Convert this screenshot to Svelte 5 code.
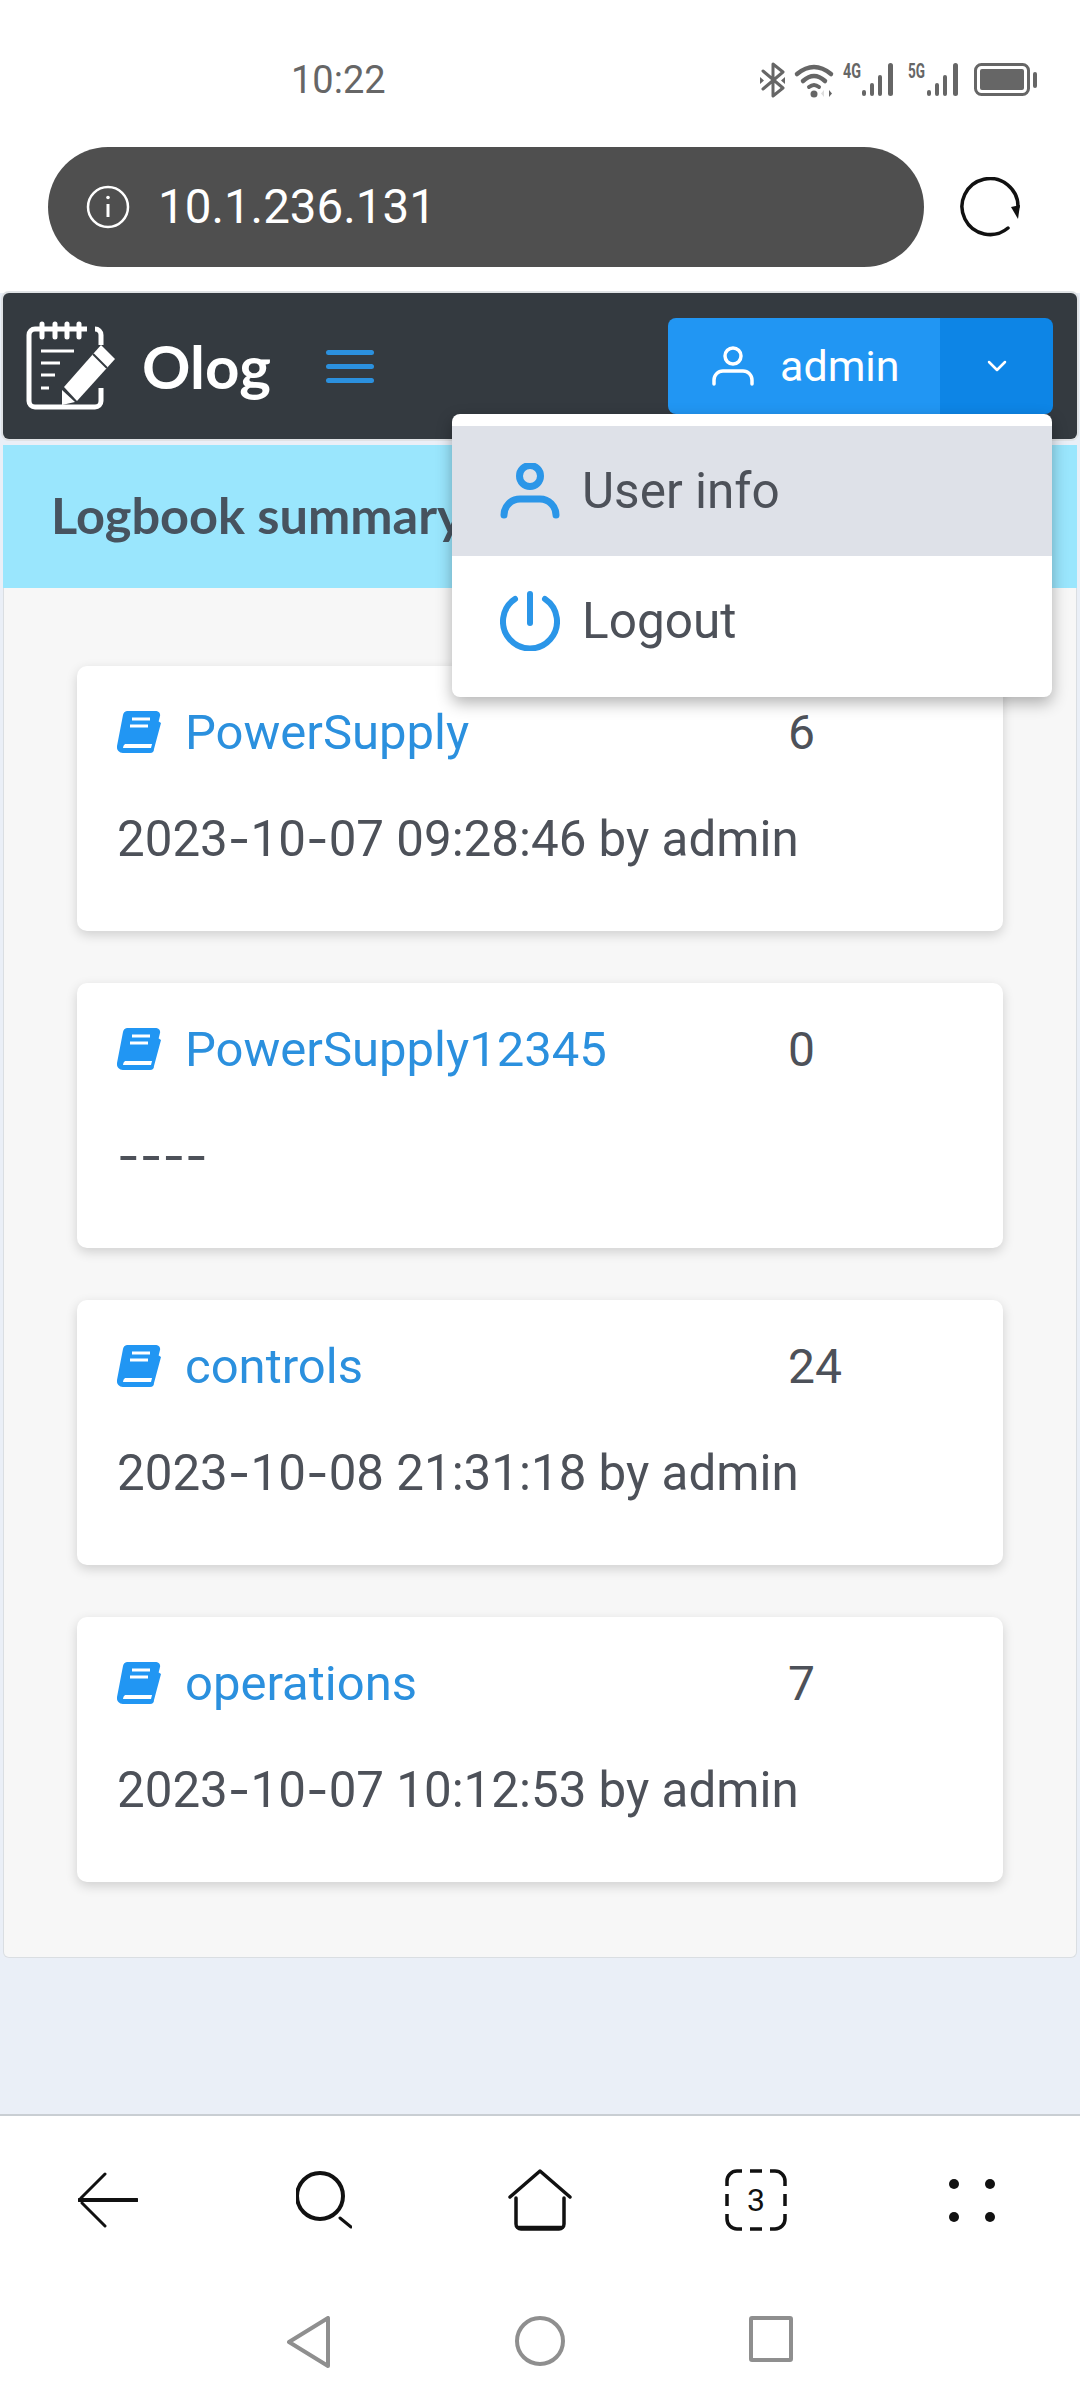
<script>
  const logbooks = [
    { name: "PowerSupply", count: 6, last: "2023-10-07 09:28:46 by admin" },
    { name: "PowerSupply12345", count: 0, last: "----" },
    { name: "controls", count: 24, last: "2023-10-08 21:31:18 by admin" },
    { name: "operations", count: 7, last: "2023-10-07 10:12:53 by admin" }
  ];
</script>

<div class="phone">
  <div class="status">
    <span class="time">10:22</span>
    <svg class="status-icons" width="277" height="42" viewBox="0 -6 277 42" fill="#666">
      <path d="M3 9 L23 26 L13 34 V2 L23 10 L3 27" fill="none" stroke="#666" stroke-width="3" stroke-linejoin="round" stroke-linecap="round"/>
      <path d="M0 15 l4 3.5 l-4 3.5z M25 15 l-4 3.5 l4 3.5z"/>
      <path d="M37 12 Q54 -2 71 12" fill="none" stroke="#666" stroke-width="4.5" stroke-linecap="round"/>
      <path d="M43 19 Q54 9 65 19" fill="none" stroke="#666" stroke-width="4.5" stroke-linecap="round"/>
      <path d="M49 25 Q54 21 59 25" fill="none" stroke="#666" stroke-width="4" stroke-linecap="round"/>
      <circle cx="54" cy="32" r="3.5"/>
      <path d="M64 28 v7 l-3 -3.5z" fill="#ddd"/><path d="M69 28 v7 l3 -3.5z"/>
      <text x="83" y="16" class="net" textLength="18" lengthAdjust="spacingAndGlyphs">4G</text>
      <rect x="102" y="28" width="4" height="6" rx="2"/><rect x="110" y="21" width="4" height="13" rx="2"/><rect x="118" y="13" width="4" height="21" rx="2"/><rect x="128" y="1" width="5" height="33" rx="2.5"/>
      <text x="148" y="16" class="net" textLength="17" lengthAdjust="spacingAndGlyphs">5G</text>
      <rect x="167" y="28" width="4" height="6" rx="2"/><rect x="175" y="21" width="4" height="13" rx="2"/><rect x="183" y="13" width="4" height="21" rx="2"/><rect x="193" y="1" width="5" height="33" rx="2.5"/>
      <rect x="215.5" y="2.5" width="53" height="30" rx="6" fill="none" stroke="#666" stroke-width="3"/>
      <rect x="220" y="7" width="44" height="21" rx="2"/>
      <rect x="273" y="10" width="4" height="16" rx="2"/>
    </svg>
  </div>

  <div class="address">
    <div class="url">
      <svg width="44" height="44" viewBox="0 0 44 44" fill="none" stroke="#fff" stroke-width="2.5">
        <circle cx="22" cy="22" r="20"/>
        <path d="M22 19 V32" stroke-width="3"/>
        <circle cx="22" cy="12.5" r="1.8" fill="#fff" stroke="none"/>
      </svg>
      <span>10.1.236.131</span>
    </div>
    <svg class="reload" width="62" height="60" viewBox="0 0 62 60" fill="none">
      <path d="M49 51 A28 28 0 1 1 59 30" stroke="#111" stroke-width="3.5" stroke-linecap="round"/>
      <path d="M52 30 L61 28 L59 42z" fill="#111"/>
    </svg>
  </div>

  <div class="page">
    <nav class="navbar">
      <svg class="logo" width="90" height="90" viewBox="0 0 90 90" fill="none">
        <path d="M62 8 H10 a6 6 0 0 0 -6 6 V80 a6 6 0 0 0 6 6 H70 a6 6 0 0 0 6 -6 V67 M76 24 V14 a6 6 0 0 0 -6 -6" stroke="#fff" stroke-width="5"/>
        <g stroke="#fff" stroke-width="5" stroke-linecap="round">
          <path d="M17 3 V16 M30 3 V16 M42 3 V16 M54 3 V16"/>
        </g>
        <g stroke="#fff" stroke-width="3">
          <path d="M16 30 H49 M16 42 H35 M16 54 H30 M16 67 H24"/>
        </g>
        <path d="M39 66 L76 24 L90 38 L52 80z" fill="#fff"/>
        <path d="M68 33 L82 47" stroke="#343a40" stroke-width="2"/>
        <path d="M37 69 L50 81 L37 84z" fill="#fff"/>
      </svg>
      <span class="brand">Olog</span>
      <span class="burger"><i></i><i></i><i></i></span>
      <div class="user-group">
        <div class="user-btn">
          <svg width="42" height="40" viewBox="0 0 42 40" fill="none" stroke="#fff" stroke-width="3.5" stroke-linecap="round">
            <circle cx="21" cy="10" r="8"/>
            <path d="M2 38 V34 a9 9 0 0 1 9 -9 H31 a9 9 0 0 1 9 9 V38"/>
          </svg>
          <span>admin</span>
        </div>
        <div class="caret">
          <svg width="20" height="12" viewBox="0 0 20 12" fill="none" stroke="#fff" stroke-width="2.5" stroke-linecap="round" stroke-linejoin="round">
            <path d="M2 2 L10 10 L18 2"/>
          </svg>
        </div>
      </div>
      <div class="menu">
        <div class="menu-item active">
          <svg width="60" height="56" viewBox="0 0 60 56" fill="none" stroke="#2b96e8" stroke-width="7" stroke-linecap="round">
            <circle cx="30" cy="13" r="10.5"/>
            <path d="M4 52 a16 16 0 0 1 16 -16 H40 a16 16 0 0 1 16 16"/>
          </svg>
          <span>User info</span>
        </div>
        <div class="menu-item">
          <svg width="60" height="60" viewBox="0 0 60 60" fill="none" stroke="#2b96e8" stroke-width="6" stroke-linecap="round">
            <path d="M15 8 A27 27 0 1 0 45 8"/>
            <path d="M30 3 V32"/>
          </svg>
          <span>Logout</span>
        </div>
      </div>
    </nav>

    <div class="alert">Logbook summary</div>

    <section class="panel">
      {#each logbooks as book}
        <article class="card">
          <div class="row">
            <svg class="book" width="44" height="42" viewBox="0 0 44 42">
              <path d="M10 0 H39 a4 4 0 0 1 4 5 L36 33 H8 a5 5 0 0 0 -2 4 H34 L41 10 l3 2 L37 38 a4 4 0 0 1 -4 4 H6 a6 6 0 0 1 -6 -7 L6 4 a5 5 0 0 1 4 -4z" fill="#2196f3"/>
              <path d="M15 8 H33 M13 15 H31" stroke="#fff" stroke-width="3"/>
            </svg>
            <span class="name">{book.name}</span>
            <span class="count">{book.count}</span>
          </div>
          <div class="last">{#each book.last.split("-") as part, i}{#if i}<span class="dash">-</span>{/if}{part}{/each}</div>
        </article>
      {/each}
    </section>
  </div>

  <div class="toolbar">
    <svg width="60" height="56" viewBox="0 0 60 56" fill="none" stroke="#111" stroke-linecap="round">
      <path d="M1 28 H59" stroke-width="4"/>
      <path d="M27 2 L3 26 M4 31 L27 54" stroke-width="3"/>
    </svg>
    <svg width="56" height="58" viewBox="0 0 56 58" fill="none" stroke="#111" stroke-linecap="round">
      <circle cx="24" cy="25" r="23" stroke-width="4"/>
      <path d="M44 47 L55 56" stroke-width="3"/>
    </svg>
    <svg width="64" height="62" viewBox="0 0 64 62" fill="none" stroke="#111" stroke-linecap="round" stroke-linejoin="round">
      <path d="M2 28 L32 2 L62 28" stroke-width="3.5"/>
      <path d="M8 29 V55 a5 5 0 0 0 5 5 H51 a5 5 0 0 0 5 -5 V29" stroke-width="3.5"/>
      <path d="M10 58.5 H54" stroke-width="3.5"/>
    </svg>
    <div class="tabs">
      <svg width="62" height="62" viewBox="0 0 62 62" fill="none" stroke="#111" stroke-width="3.5">
        <path d="M2 17 V12 a10 10 0 0 1 10 -10 H17 M45 2 H50 a10 10 0 0 1 10 10 V17 M60 45 V50 a10 10 0 0 1 -10 10 H45 M17 60 H12 a10 10 0 0 1 -10 -10 V45"/>
        <path d="M25 2 H37 M25 60 H37 M2 25 V37 M60 25 V37"/>
      </svg>
      <span>3</span>
    </div>
    <svg width="46" height="43" viewBox="0 0 46 43" fill="#111">
      <circle cx="5" cy="5" r="5"/><circle cx="41" cy="5" r="5"/><circle cx="5" cy="38" r="5"/><circle cx="41" cy="38" r="5"/>
    </svg>
  </div>

  <div class="sysnav">
    <svg width="44" height="52" viewBox="0 0 44 52" fill="none" stroke="#8f8f8f" stroke-width="4" stroke-linejoin="round">
      <path d="M41 2 V50 L2 26z"/>
    </svg>
    <svg width="50" height="50" viewBox="0 0 50 50" fill="none" stroke="#8f8f8f" stroke-width="4">
      <circle cx="25" cy="25" r="23"/>
    </svg>
    <svg width="44" height="46" viewBox="0 0 44 46" fill="none" stroke="#8f8f8f" stroke-width="4">
      <rect x="2" y="2" width="40" height="42" rx="1"/>
    </svg>
  </div>
</div>

<style>
  :global(body) {
    background: #fff;
    font-family: Roboto, "Liberation Sans", sans-serif;
  }
  .phone {
    width: 1080px;
    height: 2400px;
    display: flex;
    flex-direction: column;
    overflow: hidden;
    background: #fff;
  }
  .status {
    height: 147px;
    box-sizing: border-box;
    padding: 56px 43px 0 291px;
    display: flex;
    justify-content: space-between;
    align-items: flex-start;
  }
  .time {
    margin-top: 6px;
    font-size: 38px;
    line-height: 36px;
    color: #666;
  }
  .net {
    font-size: 20px;
    font-weight: 700;
    fill: #666;
  }
  .address {
    height: 146px;
    display: flex;
    align-items: flex-start;
    padding-left: 48px;
  }
  .url {
    width: 876px;
    height: 120px;
    border-radius: 60px;
    background: #4f4f4f;
    color: #fff;
    display: flex;
    align-items: center;
    gap: 28px;
    padding-left: 38px;
    box-sizing: border-box;
    font-size: 47.5px;
  }
  .reload {
    margin: 30px 0 0 35px;
  }
  .page {
    flex: 1;
    background: #eaeff7;
    min-height: 0;
  }
  .navbar {
    position: relative;
    margin: 0 3px;
    height: 146px;
    box-sizing: border-box;
    background: #343a40;
    border-radius: 6px;
    box-shadow: 0 0 0 2px #dfe2e5;
    display: flex;
    align-items: center;
    padding-left: 22px;
  }
  .logo {
    flex: none;
  }
  .brand {
    font-family: Lato, sans-serif;
    font-weight: 700;
    font-size: 60px;
    color: #fff;
    margin-left: 27px;
  }
  .burger {
    display: flex;
    flex-direction: column;
    gap: 9px;
    margin-left: 55px;
    width: 48px;
  }
  .burger i {
    display: block;
    height: 5px;
    border-radius: 3px;
    background: #2b90de;
  }
  .user-group {
    margin-left: auto;
    margin-right: 24px;
    align-self: flex-start;
    margin-top: 25px;
    display: flex;
    height: 96px;
    width: 385px;
    border-radius: 8px;
    overflow: hidden;
    color: #fff;
  }
  .user-btn {
    flex: 1;
    background: #2196f3;
    display: flex;
    align-items: center;
    gap: 26px;
    padding-left: 44px;
    font-size: 43px;
  }
  .caret {
    width: 113px;
    background: #0d85e6;
    display: flex;
    align-items: center;
    justify-content: center;
  }
  .menu {
    position: absolute;
    left: 449px;
    top: 121px;
    width: 600px;
    height: 283px;
    box-sizing: border-box;
    padding-top: 12px;
    background: #fff;
    border-radius: 8px;
    box-shadow: 0 6px 16px rgba(0, 0, 0, 0.3);
    z-index: 2;
  }
  .menu-item {
    height: 130px;
    display: flex;
    align-items: center;
    gap: 22px;
    padding-left: 48px;
    font-size: 49.5px;
    color: #4d5159;
  }
  .menu-item.active {
    background: #dee1e8;
  }
  .alert {
    margin: 6px 3px 0;
    height: 143px;
    box-sizing: border-box;
    padding: 0 0 5px 48px;
    display: flex;
    align-items: center;
    background: #9ae6fd;
    font-family: Lato, sans-serif;
    font-weight: 700;
    font-size: 50.5px;
    color: #47535f;
  }
  .panel {
    margin: 0 3px;
    padding: 78px 73px 74px;
    height: 1370px;
    box-sizing: border-box;
    background: #f7f7f7;
    border: 1px solid #dadee2;
    border-top: 0;
    border-radius: 0 0 6px 6px;
    display: flex;
    flex-direction: column;
    gap: 52px;
  }
  .card {
    height: 265px;
    flex: none;
    box-sizing: border-box;
    padding: 38px 40px 0;
    background: #fff;
    border-radius: 10px;
    box-shadow: 0 4px 12px rgba(0, 0, 0, 0.16);
  }
  .row {
    display: flex;
    align-items: center;
    height: 56px;
  }
  .book {
    flex: none;
  }
  .name {
    margin-left: 24px;
    font-size: 49px;
    color: #2b90de;
    width: 603px;
  }
  .count {
    font-size: 48px;
    color: #4d5159;
  }
  .last {
    margin-top: 50px;
    font-size: 49.3px;
    line-height: 56px;
    color: #4d5159;
  }
  .dash {
    font-family: Inter, sans-serif;
  }
  .toolbar {
    height: 170px;
    flex: none;
    border-top: 2px solid #c9ced3;
    background: #fff;
    display: grid;
    grid-template-columns: repeat(5, 216px);
    justify-items: center;
    align-items: center;
    box-sizing: border-box;
  }
  .tabs {
    position: relative;
    width: 62px;
    height: 62px;
    display: flex;
    align-items: center;
    justify-content: center;
    font-size: 32px;
    color: #111;
  }
  .tabs svg {
    position: absolute;
    inset: 0;
  }
  .sysnav {
    height: 116px;
    flex: none;
    display: grid;
    grid-template-columns: 231px 231px 231px;
    justify-content: center;
    justify-items: center;
    align-items: start;
    padding-top: 32px;
    box-sizing: border-box;
  }
</style>
